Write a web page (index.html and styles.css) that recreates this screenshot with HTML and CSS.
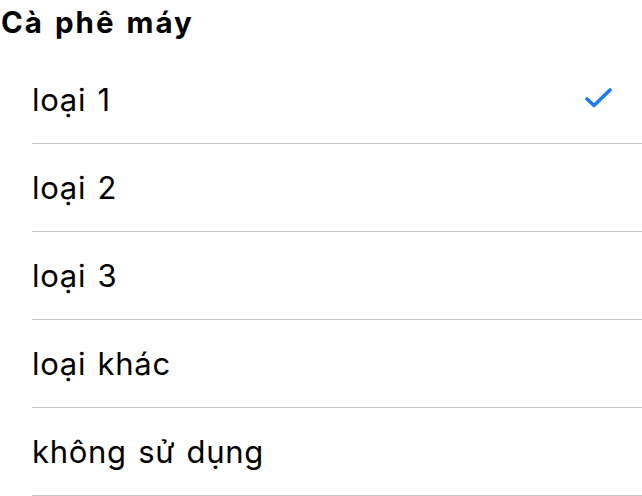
FILE: index.html
```html
<!DOCTYPE html>
<html lang="vi">
<head>
<meta charset="utf-8">
<link rel="stylesheet" href="styles.css">
</head>
<body>
<div class="screen">
  <h1 class="title">Cà phê máy</h1>
  <ul class="list">
    <li class="row"><span class="label">loại 1</span>
      <svg class="check" width="30" height="24" viewBox="0 0 30 24"><polyline points="5,15 12,21.5 28,6" fill="none" stroke="#1a7cf5" stroke-width="3.6" stroke-linecap="round" stroke-linejoin="round"/></svg>
    </li>
    <li class="row"><span class="label">loại 2</span></li>
    <li class="row"><span class="label">loại 3</span></li>
    <li class="row"><span class="label">loại khác</span></li>
    <li class="row"><span class="label">không sử dụng</span></li>
  </ul>
</div>
</body>
</html>
```
FILE: styles.css
```css
html, body {
  margin: 0;
  padding: 0;
  background: #ffffff;
}
.screen {
  width: 642px;
  height: 496px;
  overflow: hidden;
  font-family: Inter, "Liberation Sans", Arial, sans-serif;
  color: #000;
}
.title {
  margin: 0;
  padding: 0 0 0 1px;
  font-size: 29.5px;
  font-weight: bold;
  letter-spacing: 2px;
  word-spacing: 2px;
  line-height: 44px;
  height: 56px;
  box-sizing: border-box;
}
.list {
  list-style: none;
  margin: 0 0 0 32px;
  padding: 0;
}
.row {
  height: 88px;
  box-sizing: border-box;
  border-bottom: 1px solid #c8c7cc;
  display: flex;
  align-items: center;
  justify-content: space-between;
  padding-right: 30px;
}
.label {
  font-size: 31px;
  line-height: 36px;
  letter-spacing: 0.7px;
  word-spacing: 2px;
}
.check {
  display: block;
  margin-top: -8px;
}
```
